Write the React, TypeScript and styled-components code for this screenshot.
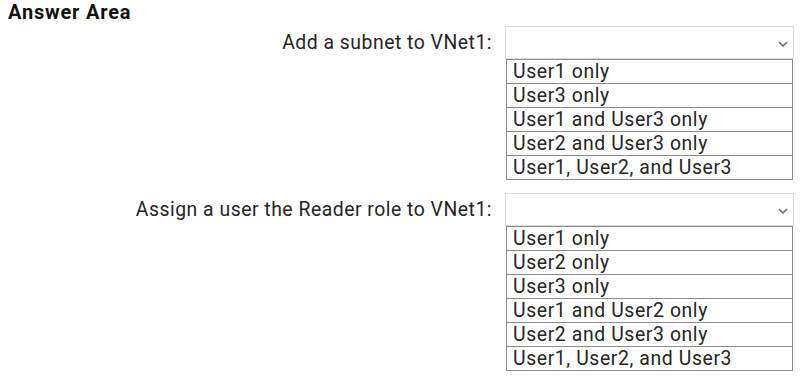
import { createGlobalStyle } from "styled-components";
import styled from "styled-components";

const GlobalStyle = createGlobalStyle`
  html, body {
    margin: 0;
    padding: 0;
    background: #ffffff;
  }
  body {
    font-family: Roboto, "Liberation Sans", sans-serif;
    color: #222222;
  }
`;

const Page = styled.div`
  width: 805px;
  height: 379px;
  overflow: hidden;
  display: flex;
  flex-direction: column;
`;

const Heading = styled.div`
  height: 26px;
  padding-left: 8px;
  font-size: 20px;
  font-weight: 700;
  line-height: 25px;
  letter-spacing: 0.8px;
  color: #111111;
`;

const Question = styled.div<{ $gap?: number }>`
  display: flex;
  align-items: flex-start;
  margin-top: ${(p) => p.$gap ?? 0}px;
`;

const Label = styled.div`
  width: 492px;
  height: 33px;
  line-height: 33px;
  text-align: right;
  font-size: 19.4px;
  letter-spacing: 0.5px;
  color: #252525;
  white-space: nowrap;
`;

const Control = styled.div`
  margin-left: 13px;
  width: 289px;
  display: flex;
  flex-direction: column;
`;

const Select = styled.div`
  height: 31px;
  border: 1px solid #dcdcdc;
  display: flex;
  align-items: center;
  justify-content: flex-end;
  padding: 3px 5px 0 0;
  box-sizing: border-box;
  height: 33px;
`;

const Options = styled.div`
  margin: 0 1px;
  border: 1px solid #8a8a8a;
  border-top: none;
  display: flex;
  flex-direction: column;
`;

const Option = styled.div`
  height: 23px;
  line-height: 23px;
  border-top: 1px solid #8a8a8a;
  padding-left: 6px;
  font-size: 19.4px;
  letter-spacing: 0.6px;
  color: #252525;
  white-space: nowrap;
`;

const Chevron = () => (
  <svg width="10" height="6" viewBox="0 0 10 6">
    <path d="M1 1 L5 5 L9 1" fill="none" stroke="#6b6b6b" strokeWidth="1.6" />
  </svg>
);

const questions = [
  {
    label: "Add a subnet to VNet1:",
    options: [
      "User1 only",
      "User3 only",
      "User1 and User3 only",
      "User2 and User3 only",
      "User1, User2, and User3",
    ],
  },
  {
    label: "Assign a user the Reader role to VNet1:",
    options: [
      "User1 only",
      "User2 only",
      "User3 only",
      "User1 and User2 only",
      "User2 and User3 only",
      "User1, User2, and User3",
    ],
  },
];

export default function App() {
  return (
    <>
      <GlobalStyle />
      <Page>
        <Heading>Answer Area</Heading>
        {questions.map((q, i) => (
          <Question key={q.label} $gap={i === 0 ? 0 : 13}>
            <Label>{q.label}</Label>
            <Control>
              <Select>
                <Chevron />
              </Select>
              <Options>
                {q.options.map((o) => (
                  <Option key={o}>{o}</Option>
                ))}
              </Options>
            </Control>
          </Question>
        ))}
      </Page>
    </>
  );
}
